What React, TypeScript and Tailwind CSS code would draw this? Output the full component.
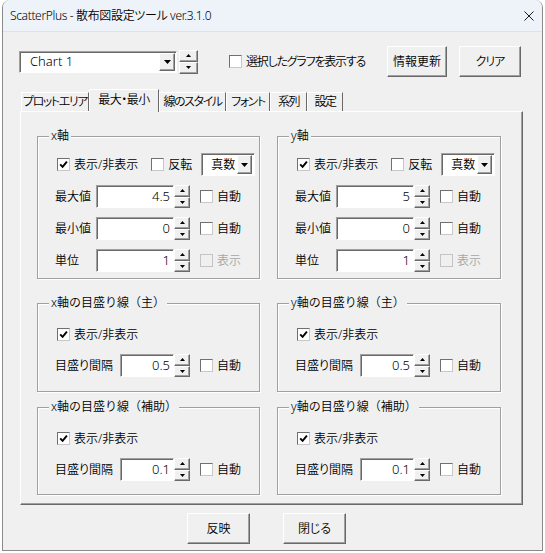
import React from "react";

const raised =
  "border border-t-white border-l-white border-r-[#696969] border-b-[#696969] bg-[#f0f0f0] shadow-[inset_-1px_-1px_0_#a0a0a0]";
const sunken =
  "border border-t-[#a0a0a0] border-l-[#a0a0a0] border-r-white border-b-white bg-white shadow-[inset_1px_1px_0_#696969]";

function Arrow({ dir }: { dir: "up" | "down" }) {
  return (
    <svg width="5" height="3" viewBox="0 0 5 3">
      <path d={dir === "up" ? "M0 3h5L2.5 0z" : "M0 0h5L2.5 3z"} fill="#000" />
    </svg>
  );
}

function DropArrow() {
  return (
    <svg width="7" height="4" viewBox="0 0 7 4">
      <path d="M0 0h7L3.5 4z" fill="#000" />
    </svg>
  );
}

function Spin({ tall }: { tall?: boolean }) {
  return (
    <div className={`flex shrink-0 flex-col ${tall ? "h-[24px] w-[19px]" : "h-[23px] w-[16px]"}`}>
      <div className={`flex flex-1 items-center justify-center ${raised}`}>
        <Arrow dir="up" />
      </div>
      <div className={`flex flex-1 items-center justify-center ${raised}`}>
        <Arrow dir="down" />
      </div>
    </div>
  );
}

function Check({
  label,
  checked,
  disabled,
  className = "",
  textClass = "",
}: {
  label: string;
  checked?: boolean;
  disabled?: boolean;
  className?: string;
  textClass?: string;
}) {
  return (
    <div className={`flex items-center gap-[4px] ${className}`}>
      <span
        className={`flex h-[13px] w-[13px] shrink-0 items-center justify-center border ${
          disabled
            ? "border-[#c4c4c4] bg-[#f0f0f0]"
            : "border-t-[#707070] border-l-[#707070] border-r-[#c8c8c8] border-b-[#c8c8c8] bg-white"
        }`}
      >
        {checked && (
          <svg width="9" height="9" viewBox="0 0 9 9">
            <path d="M1.2 4.4 L3.6 6.9 L7.9 1.6" stroke="#000" strokeWidth="1.9" fill="none" />
          </svg>
        )}
      </span>
      <span className={`whitespace-nowrap leading-none ${disabled ? "text-[#a6a6a6]" : ""} ${textClass}`}>
        {label}
      </span>
    </div>
  );
}

function NumRow({
  label,
  value,
  labelW,
  inputW,
  disabledCheck,
  checkLabel = "自動",
}: {
  label: string;
  value: string;
  labelW: string;
  inputW: string;
  disabledCheck?: boolean;
  checkLabel?: string;
}) {
  return (
    <div className="flex h-[23px] items-center">
      <span className={`shrink-0 whitespace-nowrap leading-none ${labelW}`}>{label}</span>
      <div className={`flex h-[23px] items-center justify-end pr-[3px] text-[13px] ${sunken} ${inputW}`}>
        {value}
      </div>
      <Spin />
      <Check label={checkLabel} disabled={disabledCheck} className="ml-[10px]" />
    </div>
  );
}

function Select() {
  return (
    <div className={`ml-[9px] flex h-[23px] w-[54px] items-center ${sunken}`}>
      <span className="flex-1 pr-[2px] text-right leading-none">真数</span>
      <div className={`mr-[2px] flex h-[19px] w-[15px] items-center justify-center ${raised}`}>
        <DropArrow />
      </div>
    </div>
  );
}

function Group({
  title,
  className,
  children,
}: {
  title: string;
  className: string;
  children: React.ReactNode;
}) {
  return (
    <div className={`relative border border-[#a0a0a0] shadow-[1px_1px_0_#fff,inset_1px_1px_0_#fff] ${className}`}>
      <span className="absolute -top-[9px] left-[11px] bg-[#f0f0f0] px-[2px] leading-[16px] whitespace-nowrap [font-feature-settings:normal]">
        {title}
      </span>
      {children}
    </div>
  );
}

function AxisGroup({ axis, max, width }: { axis: string; max: string; width: string }) {
  return (
    <Group title={`${axis}軸`} className={`h-[143px] pl-[17px] pt-[16px] ${width}`}>
      <div className="flex flex-col gap-[9px]">
        <div className="flex h-[23px] items-center">
          <Check checked label="表示/非表示" className="ml-[2px]" />
          <Check label="反転" className="ml-[13px]" />
          <Select />
        </div>
        <NumRow label="最大値" value={max} labelW="w-[41px]" inputW="w-[78px]" />
        <NumRow label="最小値" value="0" labelW="w-[41px]" inputW="w-[78px]" />
        <NumRow label="単位" value="1" labelW="w-[41px]" inputW="w-[78px]" disabledCheck checkLabel="表示" />
      </div>
    </Group>
  );
}

function TickGroup({
  title,
  value,
  className,
}: {
  title: string;
  value: string;
  className: string;
}) {
  return (
    <Group title={title} className={`pl-[17px] pt-[19px] ${className}`}>
      <div className="flex flex-col gap-[8px]">
        <div className="flex h-[23px] items-center">
          <Check checked label="表示/非表示" className="ml-[2px]" />
        </div>
        <NumRow label="目盛り間隔" value={value} labelW="w-[65px]" inputW="w-[54px]" />
      </div>
    </Group>
  );
}

const tabs = [
  { label: "プロットエリア", w: "w-[68px]" },
  { label: "最大・最小", w: "w-[70px]", active: true },
  { label: "線のスタイル", w: "w-[67px]" },
  { label: "フォント", w: "w-[44px]" },
  { label: "系列", w: "w-[37px]" },
  { label: "設定", w: "w-[36px]" },
];

export default function App() {
  return (
    <div className="h-[553px] w-[545px] overflow-hidden bg-white text-[12px] font-[350] text-black font-['Noto_Sans','Noto_Sans_CJK_JP',sans-serif] [font-feature-settings:'palt']">
      <div className="ml-[2px] flex h-[551px] w-[541px] flex-col overflow-hidden rounded-t-[8px] border-x border-b border-[#8b8b8b] bg-[#f0f0f0]">
        {/* Title bar */}
        <div className="flex h-[32px] shrink-0 items-center border-b border-[#dde2e8] bg-[#eef3f9] pl-[7px] pr-[8px]">
          <span className="text-[12px] leading-none tracking-[-0.35px] whitespace-nowrap">
            ScatterPlus - 散布図設定ツール ver.3.1.0
          </span>
          <svg className="ml-auto" width="10" height="10" viewBox="0 0 10 10">
            <path d="M0.5 0.5 L9.5 9.5 M9.5 0.5 L0.5 9.5" stroke="#1a1a1a" strokeWidth="1" />
          </svg>
        </div>

        {/* Chart selector row */}
        <div className="mt-[14px] flex h-[31px] items-center pl-[16px] pr-[21px]">
          <div className={`flex h-[22px] w-[158px] items-center ${sunken}`}>
            <span className="flex-1 pl-[10px] text-[13px] leading-none">Chart 1</span>
            <div className={`mr-[1px] flex h-[18px] w-[16px] items-center justify-center ${raised}`}>
              <DropArrow />
            </div>
          </div>
          <div className="ml-[2px]">
            <Spin tall />
          </div>
          <Check label="選択したグラフを表示する" className="ml-[31px]" textClass="tracking-[-1.2px]" />
          <div className="ml-auto flex gap-[12px]">
            <button className={`h-[31px] w-[60px] ${raised}`}>情報更新</button>
            <button className={`h-[31px] w-[62px] tracking-[-1px] ${raised}`}>クリア</button>
          </div>
        </div>

        {/* Tabs */}
        <div className="ml-[18px] mt-[12px] flex h-[22px] items-end">
          {tabs.map((t) =>
            t.active ? (
              <div
                key={t.label}
                className={`relative z-10 -mb-[1px] flex h-[23px] items-center justify-center whitespace-nowrap border-t border-l border-r border-t-white border-l-white border-r-[#696969] bg-[#f0f0f0] pb-[2px] tracking-[-0.5px] ${t.w}`}
              >
                {t.label}
              </div>
            ) : (
              <div
                key={t.label}
                className={`flex h-[19px] items-center justify-center whitespace-nowrap border-t border-l border-r border-t-white border-l-white border-r-[#696969] tracking-[-1.4px] ${t.w}`}
              >
                {t.label}
              </div>
            )
          )}
        </div>

        {/* Tab panel */}
        <div className="ml-[17px] flex h-[394px] w-[503px] flex-col border border-t-white border-l-white border-r-[#696969] border-b-[#696969] pl-[16px] pt-[24px] shadow-[inset_-1px_-1px_0_#a0a0a0]">
          <div className="flex gap-[17px]">
            <AxisGroup axis="x" max="4.5" width="w-[223px]" />
            <AxisGroup axis="y" max="5" width="w-[224px]" />
          </div>
          <div className="mt-[24px] flex gap-[17px]">
            <TickGroup title="x軸の目盛り線（主）" value="0.5" className="h-[89px] w-[223px]" />
            <TickGroup title="y軸の目盛り線（主）" value="0.5" className="h-[89px] w-[224px]" />
          </div>
          <div className="mt-[15px] flex gap-[17px]">
            <TickGroup title="x軸の目盛り線（補助）" value="0.1" className="h-[88px] w-[223px]" />
            <TickGroup title="y軸の目盛り線（補助）" value="0.1" className="h-[88px] w-[224px]" />
          </div>
        </div>

        {/* Footer buttons */}
        <div className="mt-[8px] flex gap-[33px] pl-[184px]">
          <button className={`h-[31px] w-[63px] ${raised}`}>反映</button>
          <button className={`h-[31px] w-[63px] ${raised}`}>閉じる</button>
        </div>
      </div>
    </div>
  );
}
